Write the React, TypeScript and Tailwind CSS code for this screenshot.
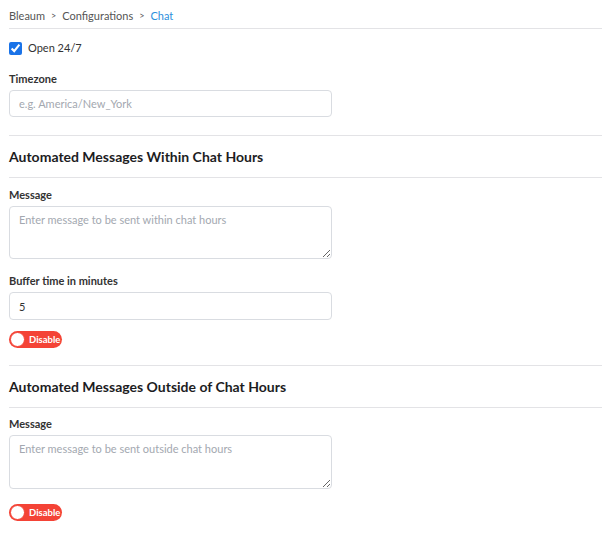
const font = { fontFamily: '"Lato", "Noto Sans", sans-serif' };

function Toggle() {
  return (
    <div className="flex h-[17px] w-[53px] items-center rounded-full bg-[#f44336] pl-[1px]">
      <span className="h-[15px] w-[15px] rounded-full border border-[#f44336] bg-white" />
      <span className="ml-[4px] text-[9.5px] font-bold leading-none text-white">Disable</span>
    </div>
  );
}

function Label({ children }: { children: React.ReactNode }) {
  return <div className="flex h-[12px] items-center text-[11px] font-bold text-[#333]">{children}</div>;
}

function Heading({ children }: { children: React.ReactNode }) {
  return (
    <div className="flex h-[42px] items-center border-b border-[#e3e3e6] pb-[1px] text-[14px] font-bold text-[#1d1d1f]">
      {children}
    </div>
  );
}

const field =
  "mt-[5px] w-[323px] rounded-[4px] border border-[#d9dce1] px-[9px] text-[11px] text-[#333] outline-none placeholder:text-[#a3a8b0]";

export default function App() {
  return (
    <div className="min-h-[555px] bg-white pl-[9px]" style={font}>
      <div className="flex h-[29px] items-start gap-[6px] border-b border-[#e3e3e6] pt-[9px] text-[11px] leading-[14px] text-[#555]">
        <span>Bleaum</span>
        <span className="text-[9px]">&gt;</span>
        <span>Configurations</span>
        <span className="text-[9px]">&gt;</span>
        <span className="text-[#2d8fdc]">Chat</span>
      </div>

      <label className="mt-[13px] flex h-[13px] items-center gap-[6px] text-[11px] text-[#333]">
        <input type="checkbox" defaultChecked className="m-0 h-[13px] w-[13px] accent-[#1a73e8]" />
        <span>Open 24/7</span>
      </label>

      <div className="mt-[18px]">
        <Label>Timezone</Label>
        <input placeholder="e.g. America/New_York" className={`${field} h-[27px]`} />
      </div>

      <div className="mt-[18px] border-t border-[#e3e3e6]" />
      <Heading>Automated Messages Within Chat Hours</Heading>

      <div className="mt-[11px]">
        <Label>Message</Label>
        <textarea
          placeholder="Enter message to be sent within chat hours"
          className={`${field} block h-[53px] py-[5px]`}
        />
      </div>

      <div className="mt-[16px]">
        <Label>Buffer time in minutes</Label>
        <input defaultValue="5" className={`${field} h-[28px]`} />
      </div>

      <div className="mt-[11px]">
        <Toggle />
      </div>

      <div className="mt-[17px] border-t border-[#e3e3e6]" />
      <Heading>Automated Messages Outside of Chat Hours</Heading>

      <div className="mt-[10px]">
        <Label>Message</Label>
        <textarea
          placeholder="Enter message to be sent outside chat hours"
          className={`${field} block h-[54px] py-[5px]`}
        />
      </div>

      <div className="mt-[15px]">
        <Toggle />
      </div>
    </div>
  );
}
